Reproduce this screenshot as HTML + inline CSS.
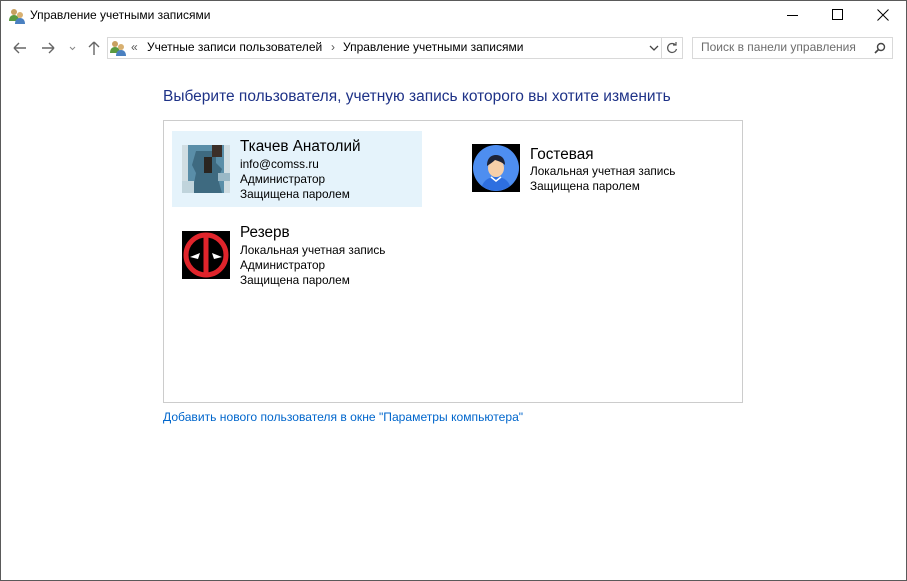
<!DOCTYPE html>
<html><head><meta charset="utf-8"><style>
*{margin:0;padding:0;box-sizing:border-box}
body{width:907px;height:581px;background:#fff;font-family:"Segoe UI","Liberation Sans","DejaVu Sans",sans-serif;position:relative;overflow:hidden;color:#000}
.win{position:absolute;left:0;top:0;width:907px;height:581px;border:1px solid #5a5a5a}
.abs{position:absolute}
.t{font-size:12px;white-space:nowrap}
.sm{font-size:11.8px;line-height:15px;white-space:nowrap}
</style></head><body>
<div class="win"></div>
<svg class="abs" style="left:8px;top:7px" width="18" height="18" viewBox="0 0 18 18">
<circle cx="6" cy="5" r="3" fill="#c8a060"/><path d="M1 14c0-4 2-6 5-6s5 2 5 6z" fill="#5a9a40"/>
<circle cx="12" cy="8" r="3" fill="#d8b070"/><path d="M7 17c0-4 2-6 5-6s5 2 5 6z" fill="#4a80c0"/></svg>
<div class="abs t" style="left:30px;top:8px">Управление учетными записями</div>
<div class="abs" style="left:787px;top:15px;width:11px;height:1px;background:#000"></div>
<div class="abs" style="left:832px;top:9px;width:11px;height:11px;border:1px solid #000"></div>
<svg class="abs" style="left:877px;top:9px" width="12" height="12"><path d="M0.5 0.5L11.5 11.5M11.5 0.5L0.5 11.5" stroke="#000" stroke-width="1"/></svg>
<svg class="abs" style="left:12px;top:40px" width="100" height="16" viewBox="0 0 100 16">
<path d="M2 8h12M2 8l5-5M2 8l5 5" stroke="#666" stroke-width="1.4" fill="none"/>
<path d="M30 8h12M42 8l-5-5M42 8l-5 5" stroke="#666" stroke-width="1.4" fill="none"/>
<path d="M58 7l2.5 2.5L63 7" stroke="#888" stroke-width="1" fill="none"/>
<path d="M82 2v13M82 2l-5 5M82 2l5 5" stroke="#666" stroke-width="1.4" fill="none"/></svg>
<div class="abs" style="left:107px;top:37px;width:555px;height:22px;border:1px solid #d9d9d9"></div>
<div class="abs" style="left:661px;top:37px;width:22px;height:22px;border:1px solid #d9d9d9"></div>
<svg class="abs" style="left:109px;top:39px" width="18" height="18" viewBox="0 0 18 18">
<circle cx="6" cy="5" r="3" fill="#c8a060"/><path d="M1 14c0-4 2-6 5-6s5 2 5 6z" fill="#5a9a40"/>
<circle cx="12" cy="8" r="3" fill="#d8b070"/><path d="M7 17c0-4 2-6 5-6s5 2 5 6z" fill="#4a80c0"/></svg>
<div class="abs t" style="left:131px;top:40px;color:#555">«</div>
<div class="abs t" style="left:147px;top:40px">Учетные записи пользователей</div>
<div class="abs t" style="left:331px;top:40px;color:#555">›</div>
<div class="abs t" style="left:343px;top:40px">Управление учетными записями</div>
<svg class="abs" style="left:649px;top:44px" width="10" height="8"><path d="M1 2l4 4 4-4" stroke="#444" stroke-width="1.3" fill="none"/></svg>
<svg class="abs" style="left:665px;top:41px" width="14" height="14" viewBox="0 0 14 14"><path d="M10.5 4A4.5 4.5 0 1 0 11.5 8" stroke="#555" stroke-width="1.2" fill="none"/><path d="M8 4h3V1" stroke="#555" stroke-width="1.2" fill="none"/></svg>
<div class="abs" style="left:692px;top:37px;width:201px;height:22px;border:1px solid #d9d9d9"></div>
<div class="abs t" style="left:701px;top:40px;color:#6d6d6d">Поиск в панели управления</div>
<svg class="abs" style="left:874px;top:42px" width="12" height="12"><circle cx="7" cy="5" r="3.5" stroke="#444" stroke-width="1.4" fill="none"/><path d="M4.5 7.5L1 11" stroke="#444" stroke-width="1.6"/></svg>
<div class="abs" style="left:163px;top:88px;font-size:15.5px;color:#1e3287;white-space:nowrap">Выберите пользователя, учетную запись которого вы хотите изменить</div>
<div class="abs" style="left:163px;top:120px;width:580px;height:283px;border:1px solid #cccccc"></div>
<div class="abs" style="left:172px;top:131px;width:250px;height:76px;background:#e5f3fb"></div>
<svg class="abs" style="left:182px;top:145px" width="48" height="48" viewBox="0 0 48 48">
<rect width="48" height="48" fill="#d0dde2"/><rect x="6" y="0" width="36" height="48" fill="#5a8ea8"/>
<path d="M14 6h20v12l6 6-4 10 4 14H10l4-20-4-8z" fill="#3e6a80"/>
<rect x="22" y="12" width="8" height="16" fill="#2a2520"/><rect x="30" y="0" width="10" height="12" fill="#3b2e28"/>
<rect x="0" y="36" width="12" height="12" fill="#c0d4dc"/><rect x="36" y="28" width="12" height="8" fill="#9ab8c6"/></svg>
<div class="abs" style="left:240px;top:138px;font-size:15.3px;white-space:nowrap">Ткачев Анатолий</div>
<div class="abs sm" style="left:240px;top:157px">info@comss.ru<br>Администратор<br>Защищена паролем</div>
<svg class="abs" style="left:472px;top:144px" width="48" height="48" viewBox="0 0 48 48">
<rect width="48" height="48" fill="#000"/><circle cx="24" cy="24" r="23" fill="#4e8ef0"/>
<path d="M10 42c2-6 7-9 14-9s12 3 14 9a23 23 0 0 1-28 0z" fill="#2e6fe0"/>
<path d="M19 33l5 4 5-4" stroke="#fff" stroke-width="1.5" fill="none"/>
<ellipse cx="24" cy="24" rx="8" ry="9" fill="#f7cfa8"/>
<path d="M15 22c0-8 4-11 9-11s9 3 9 10c-3-3-7-4-10-5-2 2-5 4-8 6z" fill="#1d2338"/></svg>
<div class="abs" style="left:530px;top:146px;font-size:15.3px;white-space:nowrap">Гостевая</div>
<div class="abs sm" style="left:530px;top:164px">Локальная учетная запись<br>Защищена паролем</div>
<svg class="abs" style="left:182px;top:231px" width="48" height="48" viewBox="0 0 48 48">
<rect width="48" height="48" fill="#000"/><circle cx="24" cy="24" r="20" fill="none" stroke="#e0242b" stroke-width="5"/>
<rect x="21.5" y="4" width="5" height="40" fill="#e0242b"/>
<path d="M8 26l10-4-2 6z" fill="#fff"/><path d="M40 26l-10-4 2 6z" fill="#fff"/></svg>
<div class="abs" style="left:240px;top:224px;font-size:15.3px;white-space:nowrap">Резерв</div>
<div class="abs sm" style="left:240px;top:243px">Локальная учетная запись<br>Администратор<br>Защищена паролем</div>
<div class="abs" style="left:163px;top:410px;font-size:12.1px;color:#0066cc;white-space:nowrap">Добавить нового пользователя в окне "Параметры компьютера"</div>
</body></html>
